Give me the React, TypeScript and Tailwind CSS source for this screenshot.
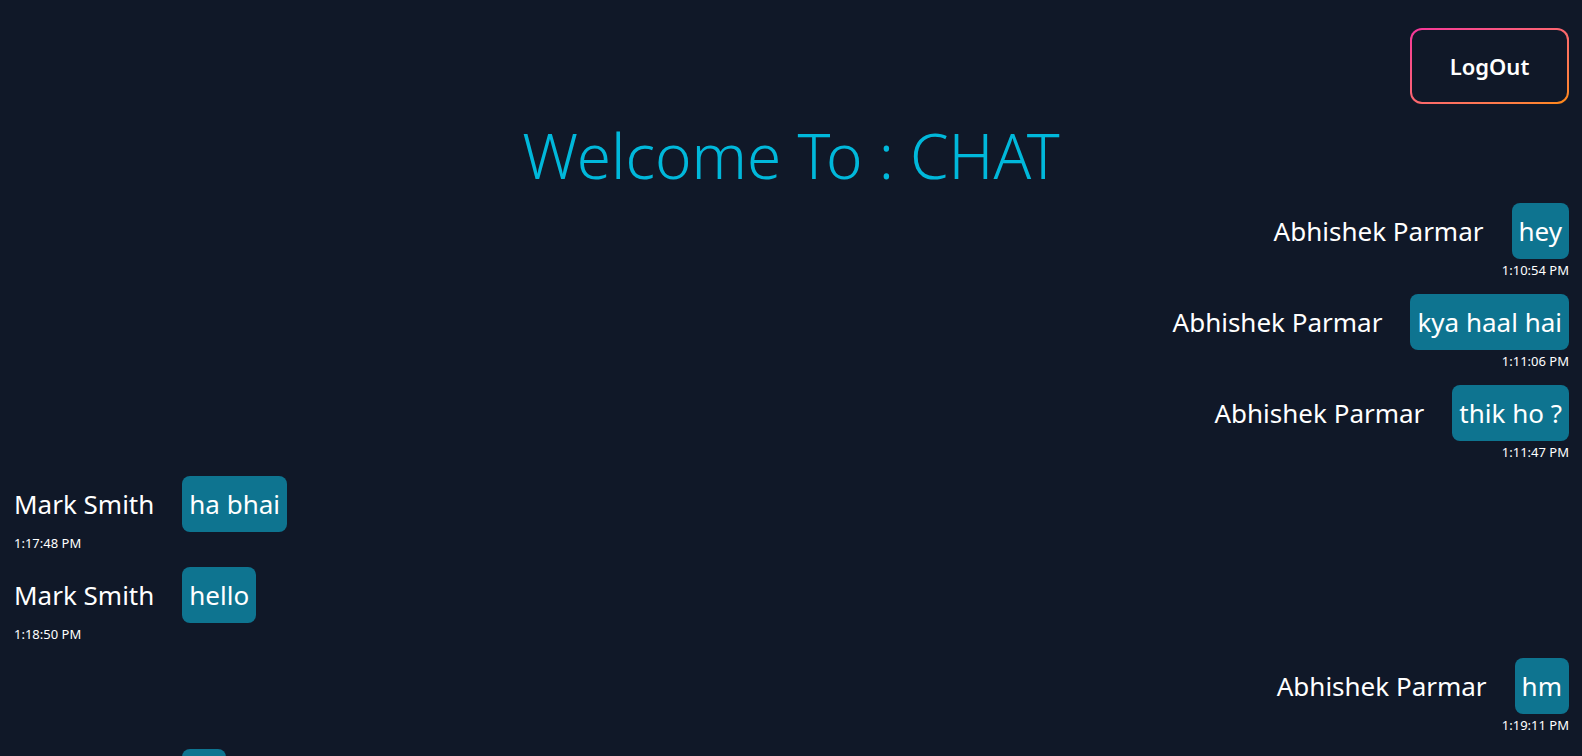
import React from 'react'

type Msg = {
  name: string
  text: string
  time: string
  mine: boolean
}

const messages: Msg[] = [
  { name: 'Abhishek Parmar', text: 'hey', time: '1:10:54 PM', mine: true },
  { name: 'Abhishek Parmar', text: 'kya haal hai', time: '1:11:06 PM', mine: true },
  { name: 'Abhishek Parmar', text: 'thik ho ?', time: '1:11:47 PM', mine: true },
  { name: 'Mark Smith', text: 'ha bhai', time: '1:17:48 PM', mine: false },
  { name: 'Mark Smith', text: 'hello', time: '1:18:50 PM', mine: false },
  { name: 'Abhishek Parmar', text: 'hm', time: '1:19:11 PM', mine: true },
  { name: 'Mark Smith', text: 'ok', time: '1:19:40 PM', mine: false },
]

function Message({ msg }: { msg: Msg }) {
  return (
    <div className={msg.mine ? 'flex flex-col items-end' : 'flex flex-col items-start'}>
      <div className="flex items-center gap-7">
        <span className="text-[26px] text-white">{msg.name}</span>
        <span className="rounded-lg bg-[#0e7490] px-[7px] py-[9px] text-[26px] leading-[38px] text-white">
          {msg.text}
        </span>
      </div>
      <span className="mt-[3px] text-[13px] leading-4 text-white">{msg.time}</span>
    </div>
  )
}

export default function App() {
  return (
    <div
      className="min-h-screen bg-gray-900 pb-10"
      style={{ fontFamily: '"Noto Sans", "Open Sans", sans-serif' }}
    >
      <div className="flex justify-end pt-7 pr-[13px]">
        <button className="rounded-xl bg-linear-to-br from-pink-500 to-orange-400 p-[2px]">
          <span className="flex h-[72px] w-[155px] items-center justify-center rounded-[10px] bg-gray-900 text-[22px] font-semibold text-white">
            LogOut
          </span>
        </button>
      </div>

      <h1 className="mt-5 text-center text-[62px] leading-none font-light text-cyan-500">
        Welcome To : CHAT
      </h1>

      <div className="mt-[17px] flex flex-col gap-[16px] pr-[13px] pl-[14px]">
        {messages.map((m, i) => (
          <Message key={i} msg={m} />
        ))}
      </div>
    </div>
  )
}
